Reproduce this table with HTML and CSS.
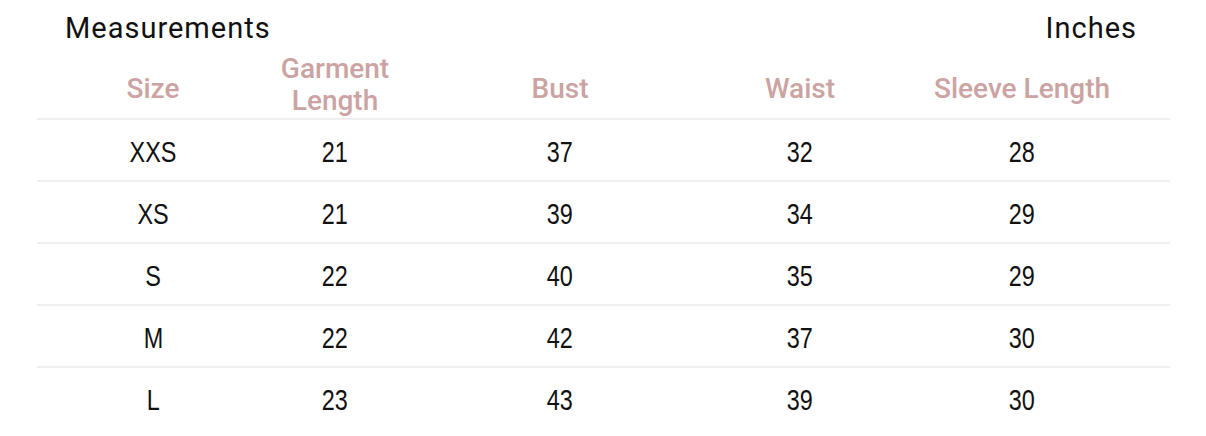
FILE: index.html
```html
<!DOCTYPE html>
<html lang="en">
<head>
<meta charset="utf-8">
<title>Measurements</title>
<link rel="stylesheet" href="styles.css">
</head>
<body>
<div class="sheet">
  <div class="title-row">
    <span class="title">Measurements</span>
    <span class="unit">Inches</span>
  </div>
  <div class="table">
    <div class="row head">
      <div class="cell one-line">Size</div>
      <div class="cell two-line">Garment Length</div>
      <div class="cell one-line">Bust</div>
      <div class="cell one-line">Waist</div>
      <div class="cell one-line">Sleeve Length</div>
    </div>
    <div class="row">
      <div class="cell"><span class="v">XXS</span></div><div class="cell"><span class="v">21</span></div><div class="cell"><span class="v">37</span></div><div class="cell"><span class="v">32</span></div><div class="cell"><span class="v">28</span></div>
    </div>
    <div class="row">
      <div class="cell"><span class="v">XS</span></div><div class="cell"><span class="v">21</span></div><div class="cell"><span class="v">39</span></div><div class="cell"><span class="v">34</span></div><div class="cell"><span class="v">29</span></div>
    </div>
    <div class="row">
      <div class="cell"><span class="v">S</span></div><div class="cell"><span class="v">22</span></div><div class="cell"><span class="v">40</span></div><div class="cell"><span class="v">35</span></div><div class="cell"><span class="v">29</span></div>
    </div>
    <div class="row">
      <div class="cell"><span class="v">M</span></div><div class="cell"><span class="v">22</span></div><div class="cell"><span class="v">42</span></div><div class="cell"><span class="v">37</span></div><div class="cell"><span class="v">30</span></div>
    </div>
    <div class="row last">
      <div class="cell"><span class="v">L</span></div><div class="cell"><span class="v">23</span></div><div class="cell"><span class="v">43</span></div><div class="cell"><span class="v">39</span></div><div class="cell"><span class="v">30</span></div>
    </div>
  </div>
</div>
</body>
</html>
```

FILE: styles.css
```css
html, body {
  margin: 0;
  padding: 0;
  background: #ffffff;
}

.sheet {
  width: 1133px;
  margin-left: 37px;
}

.title-row {
  display: flex;
  justify-content: space-between;
  align-items: baseline;
  padding: 11px 33px 0 28px;
  font-family: Roboto, "Liberation Sans", sans-serif;
  font-size: 29px;
  letter-spacing: 1px;
  line-height: 34px;
  color: #111111;
}

.row {
  display: grid;
  grid-template-columns: 232px 132px 318px 162px 282px;
  align-items: center;
  border-bottom: 2px solid #efefef;
}

.row.last {
  border-bottom: none;
}

.cell {
  text-align: center;
}

.head {
  height: 66px;
  padding-top: 7px;
  font-family: Roboto, "Liberation Sans", sans-serif;
  font-weight: 500;
  font-size: 28px;
  line-height: 32px;
  color: #cba3a2;
}

.head .one-line {
  padding-top: 8px;
}

.row:not(.head) {
  height: 57px;
  padding-top: 3px;
  font-family: "Liberation Sans", Arial, sans-serif;
  font-size: 30px;
  color: #111111;
}

.v {
  display: inline-block;
  transform: scaleX(0.78);
}
```
